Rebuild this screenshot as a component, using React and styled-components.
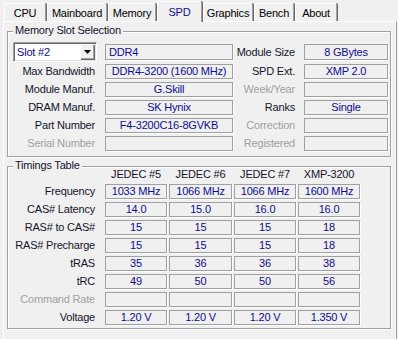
import React from 'react';
import styled, { createGlobalStyle } from 'styled-components';

const GlobalStyle = createGlobalStyle`
  html, body { margin: 0; padding: 0; background: #f0f0f0; }
  body {
    font-family: "Liberation Sans", Arial, sans-serif;
    font-size: 11px;
    letter-spacing: -0.2px;
    color: #14142a;
  }
`;

const VALUE = '#0c0c96';
const DIM = '#a0a0a0';

const Window = styled.div`
  width: 398px;
  height: 339px;
  overflow: hidden;
  background: #f0f0f0;
`;

const TabBar = styled.div`
  display: flex;
  align-items: flex-end;
  gap: 1px;
  height: 21px;
  padding-left: 4px;
  box-sizing: border-box;
`;

const Tab = styled.div`
  box-sizing: border-box;
  width: ${(p) => p.$w}px;
  height: ${(p) => (p.$active ? 21 : 18)}px;
  margin-bottom: ${(p) => (p.$active ? -1 : 0)}px;
  padding-top: ${(p) => (p.$active ? 0 : 1)}px;
  position: relative;
  z-index: ${(p) => (p.$active ? 2 : 0)};
  display: flex;
  align-items: center;
  justify-content: center;
  background: #f0f0f0;
  border-top: 1px solid #fff;
  border-left: 1px solid #fff;
  border-right: 1px solid #a0a0a0;
  box-shadow: 1px 0 0 #696969;
  border-radius: 2px 2px 0 0;
  color: ${(p) => (p.$active ? VALUE : '#000')};
  white-space: nowrap;
`;

const Panel = styled.div`
  box-sizing: border-box;
  margin-left: 3px;
  width: 394px;
  height: 330px;
  border-top: 1px solid #fff;
  border-left: 1px solid #fff;
  border-right: 1px solid #a0a0a0;
  padding: 9px 0 0 3px;
`;

const Group = styled.section`
  position: relative;
  box-sizing: border-box;
  width: 384px;
  height: ${(p) => p.$h}px;
  margin-top: ${(p) => p.$mt || 0}px;
  border: 1px solid #a0a0a0;
  box-shadow: inset 1px 1px 0 #fff, 1px 1px 0 #fff;
`;

const GroupTitle = styled.div`
  position: absolute;
  top: -8px;
  left: 5px;
  padding: 0 2px;
  line-height: 13px;
  background: #f0f0f0;
  color: #14142a;
  white-space: nowrap;
`;

const SlotGrid = styled.div`
  display: grid;
  grid-template-columns: 97px 128px 71px 84px;
  grid-template-rows: 19px repeat(5, 15px);
  row-gap: 3px;
  padding-top: 10px;
`;

const TimingGrid = styled.div`
  display: grid;
  grid-template-columns: 95px 62px 63px 62px 62px;
  grid-template-rows: 13px repeat(8, 15px);
  column-gap: 2px;
  row-gap: 3px;
  padding-top: 1px;
`;

const Label = styled.div`
  text-align: right;
  padding-right: ${(p) => p.$pr}px;
  line-height: ${(p) => (p.$first ? 16 : 15)}px;
  margin-top: ${(p) => (p.$first ? 2 : 0)}px;
  color: ${(p) => (p.$dim ? DIM : '#14142a')};
  white-space: nowrap;
`;

const ColHead = styled.div`
  text-align: center;
  line-height: 13px;
  color: #14142a;
  white-space: nowrap;
`;

const Field = styled.div`
  box-sizing: border-box;
  height: ${(p) => (p.$first ? 16 : 15)}px;
  margin-top: ${(p) => (p.$first ? 2 : 0)}px;
  border: 1px solid #a0a0a0;
  box-shadow: 1px 1px 0 #fff;
  line-height: ${(p) => (p.$first ? 14 : 13)}px;
  text-align: ${(p) => p.$align || 'center'};
  padding-left: ${(p) => (p.$align === 'left' ? 3 : 0)}px;
  color: ${VALUE};
  white-space: nowrap;
  overflow: hidden;
`;

const Combo = styled.div`
  box-sizing: border-box;
  margin-left: 5px;
  width: 84px;
  height: 20px;
  display: flex;
  padding: 1px;
  background: #fff;
  border-top: 1px solid #a0a0a0;
  border-left: 1px solid #a0a0a0;
  border-bottom: 1px solid #fff;
  border-right: 1px solid #fff;
  box-shadow: inset 1px 1px 0 #696969, inset -1px -1px 0 #e3e3e3;
`;

const ComboText = styled.div`
  flex: 1;
  padding-left: 2px;
  line-height: 16px;
  color: ${VALUE};
  white-space: nowrap;
`;

const ComboButton = styled.div`
  box-sizing: border-box;
  width: 15px;
  height: 16px;
  background: #f0f0f0;
  display: flex;
  align-items: center;
  justify-content: center;
  box-shadow: inset 1px 1px 0 #fff, inset -1px -1px 0 #696969, inset -2px -2px 0 #a0a0a0;
  padding-right: 1px;
`;

const tabs = [
  { name: 'CPU', w: 42 },
  { name: 'Mainboard', w: 60 },
  { name: 'Memory', w: 48 },
  { name: 'SPD', w: 45, active: true },
  { name: 'Graphics', w: 50 },
  { name: 'Bench', w: 40 },
  { name: 'About', w: 42 },
];

const slotRows = [
  { label: 'Max Bandwidth', value: 'DDR4-3200 (1600 MHz)', rlabel: 'SPD Ext.', rvalue: 'XMP 2.0' },
  { label: 'Module Manuf.', value: 'G.Skill', rlabel: 'Week/Year', rdim: true, rvalue: '' },
  { label: 'DRAM Manuf.', value: 'SK Hynix', rlabel: 'Ranks', rvalue: 'Single' },
  { label: 'Part Number', value: 'F4-3200C16-8GVKB', rlabel: 'Correction', rdim: true, rvalue: '' },
  { label: 'Serial Number', dim: true, value: '', rlabel: 'Registered', rdim: true, rvalue: '' },
];

const timingCols = ['JEDEC #5', 'JEDEC #6', 'JEDEC #7', 'XMP-3200'];

const timingRows = [
  { label: 'Frequency', values: ['1033 MHz', '1066 MHz', '1066 MHz', '1600 MHz'] },
  { label: 'CAS# Latency', values: ['14.0', '15.0', '16.0', '16.0'] },
  { label: 'RAS# to CAS#', values: ['15', '15', '15', '18'] },
  { label: 'RAS# Precharge', values: ['15', '15', '15', '18'] },
  { label: 'tRAS', values: ['35', '36', '36', '38'] },
  { label: 'tRC', values: ['49', '50', '50', '56'] },
  { label: 'Command Rate', dim: true, values: ['', '', '', ''] },
  { label: 'Voltage', values: ['1.20 V', '1.20 V', '1.20 V', '1.350 V'] },
];

export default function App() {
  return (
    <Window>
      <GlobalStyle />
      <TabBar>
        {tabs.map((t) => (
          <Tab key={t.name} $w={t.w} $active={t.active}>
            {t.name}
          </Tab>
        ))}
      </TabBar>
      <Panel>
        <Group $h={126}>
          <GroupTitle>Memory Slot Selection</GroupTitle>
          <SlotGrid>
            <Combo>
              <ComboText>Slot #2</ComboText>
              <ComboButton>
                <svg width="7" height="4" viewBox="0 0 7 4">
                  <path d="M0 0H7L3.5 4Z" fill="#000" />
                </svg>
              </ComboButton>
            </Combo>
            <Field $first $align="left">DDR4</Field>
            <Label $first $pr={9}>Module Size</Label>
            <Field $first>8 GBytes</Field>
            {slotRows.map((r) => (
              <React.Fragment key={r.label}>
                <Label $pr={10} $dim={r.dim}>{r.label}</Label>
                <Field>{r.value}</Field>
                <Label $pr={9} $dim={r.rdim}>{r.rlabel}</Label>
                <Field>{r.rvalue}</Field>
              </React.Fragment>
            ))}
          </SlotGrid>
        </Group>
        <Group $h={163} $mt={9}>
          <GroupTitle>Timings Table</GroupTitle>
          <TimingGrid>
            <div />
            {timingCols.map((c) => (
              <ColHead key={c}>{c}</ColHead>
            ))}
            {timingRows.map((r) => (
              <React.Fragment key={r.label}>
                <Label $pr={8} $dim={r.dim}>{r.label}</Label>
                {r.values.map((v, i) => (
                  <Field key={i}>{v}</Field>
                ))}
              </React.Fragment>
            ))}
          </TimingGrid>
        </Group>
      </Panel>
    </Window>
  );
}
